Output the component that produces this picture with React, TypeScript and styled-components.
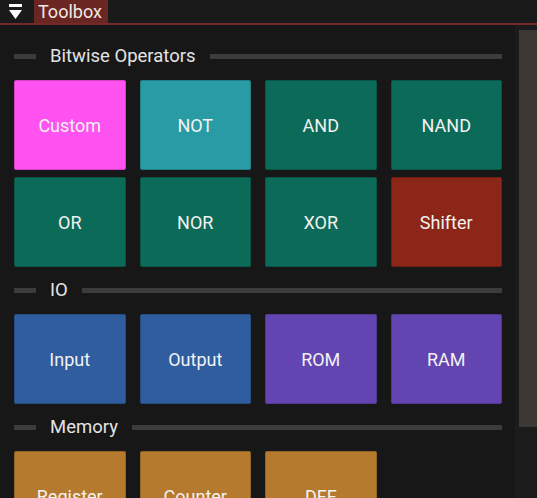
import styled, { createGlobalStyle } from 'styled-components'

const GlobalStyle = createGlobalStyle`
    html, body {
        margin: 0;
        padding: 0;
        background: #171717;
    }
    body {
        font-family: Roboto, "Noto Sans", sans-serif;
    }
`

const Window = styled.div`
    width: 537px;
    height: 498px;
    background: #171717;
    overflow: hidden;
    display: flex;
    flex-direction: column;
`
const TitleBar = styled.div`
    height: 23px;
    display: flex;
    align-items: stretch;
    background: #1a1a1a;
    border-bottom: 2px solid #782826;
    flex-shrink: 0;
`
const Collapse = styled.div`
    width: 34px;
    display: flex;
    align-items: flex-start;
    padding-left: 9px;
    box-sizing: border-box;
`
const TitleTab = styled.div`
    background: #6a2622;
    color: #f2e6e4;
    font-size: 18px;
    padding: 0 6px 0 4px;
    display: flex;
    align-items: center;
    line-height: 1;
`
const Body = styled.div`
    flex: 1;
    display: flex;
    min-height: 0;
`
const Content = styled.div`
    flex: 1;
    padding: 0 13px 0 14px;
`
const ScrollTrack = styled.div`
    width: 22px;
    background: #1b1b1b;
    padding: 5px 0 0 4px;
    box-sizing: border-box;
`
const ScrollThumb = styled.div`
    height: 397px;
    background: #3d3834;
`
const Header = styled.div<{ $first?: boolean }>`
    height: 20px;
    margin-top: ${(p) => (p.$first ? '21px' : '13px')};
    margin-bottom: 14px;
    display: flex;
    align-items: center;
    gap: 14px;
`
const Line = styled.div<{ $grow?: boolean }>`
    height: 5px;
    background: #3c3c3c;
    ${(p) => (p.$grow ? 'flex: 1;' : 'width: 22px;')}
`
const HeaderText = styled.span`
    color: #e4e4e4;
    font-size: 18.5px;
    white-space: nowrap;
`
const Grid = styled.div`
    display: grid;
    grid-template-columns: repeat(4, 1fr);
    column-gap: 14px;
    row-gap: 7px;
`
const Block = styled.div<{ $bg: string }>`
    height: 90px;
    background: ${(p) => p.$bg};
    border: 1px solid rgba(0, 0, 0, 0.18);
    border-radius: 2px;
    box-sizing: border-box;
    color: #f2f2f2;
    font-size: 18px;
    display: flex;
    align-items: center;
    justify-content: center;
`

const sections = [
    {
        title: 'Bitwise Operators',
        items: [
            ['Custom', '#ff52f0'],
            ['NOT', '#289ba5'],
            ['AND', '#0c6a58'],
            ['NAND', '#0c6a58'],
            ['OR', '#0c6a58'],
            ['NOR', '#0c6a58'],
            ['XOR', '#0c6a58'],
            ['Shifter', '#8c2618'],
        ],
    },
    {
        title: 'IO',
        items: [
            ['Input', '#305ca0'],
            ['Output', '#305ca0'],
            ['ROM', '#6345b2'],
            ['RAM', '#6345b2'],
        ],
    },
    {
        title: 'Memory',
        items: [
            ['Register', '#b57a2d'],
            ['Counter', '#b57a2d'],
            ['DFF', '#b57a2d'],
        ],
    },
]

export default function App() {
    return (
        <Window>
            <GlobalStyle />
            <TitleBar>
                <Collapse>
                    <svg width="14" height="23" viewBox="0 0 14 23">
                        <rect x="0" y="4" width="13" height="3" fill="#fff" />
                        <polygon points="0,10 13,10 6.5,19" fill="#fff" />
                    </svg>
                </Collapse>
                <TitleTab>Toolbox</TitleTab>
            </TitleBar>
            <Body>
                <Content>
                    {sections.map((s, i) => (
                        <div key={s.title}>
                            <Header $first={i === 0}>
                                <Line />
                                <HeaderText>{s.title}</HeaderText>
                                <Line $grow />
                            </Header>
                            <Grid>
                                {s.items.map(([name, bg]) => (
                                    <Block key={name} $bg={bg}>
                                        {name}
                                    </Block>
                                ))}
                            </Grid>
                        </div>
                    ))}
                </Content>
                <ScrollTrack>
                    <ScrollThumb />
                </ScrollTrack>
            </Body>
        </Window>
    )
}
